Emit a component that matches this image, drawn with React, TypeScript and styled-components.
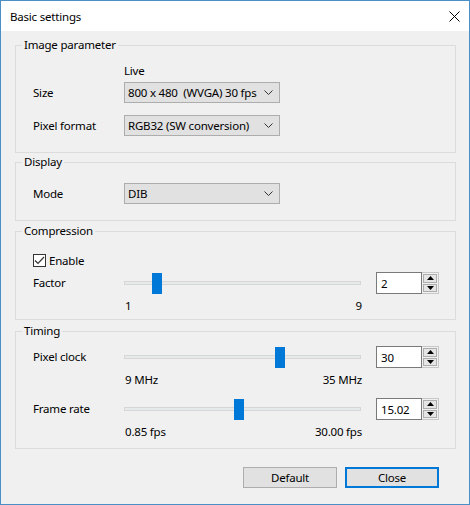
import React, { FC } from 'react';
import styled, { createGlobalStyle } from 'styled-components';

const GlobalStyle = createGlobalStyle`
  html, body {
    margin: 0;
    padding: 0;
    background: #f0f0f0;
  }
  * {
    box-sizing: border-box;
  }
`;

const Window = styled.div`
  width: 470px;
  height: 505px;
  border: 1px solid #4a8fc6;
  background: #f0f0f0;
  font-family: 'Noto Sans', 'Liberation Sans', sans-serif;
  font-size: 11.5px;
  letter-spacing: -0.2px;
  color: #000;
  display: flex;
  flex-direction: column;
  white-space: pre;
`;

const TitleBar = styled.div`
  height: 30px;
  background: #fff;
  display: flex;
  align-items: center;
  justify-content: space-between;
  padding: 1px 9px 0 9px;
  flex-shrink: 0;
`;

const Title = styled.span`
  line-height: 16px;
`;

const CloseGlyph = styled.svg`
  width: 11px;
  height: 11px;
`;

const Content = styled.div`
  flex: 1;
  display: flex;
  flex-direction: column;
  padding: 14px 13px 0 14px;
`;

const Group = styled.div<{ $height: number; $gap: number }>`
  position: relative;
  height: ${(p) => p.$height}px;
  margin-bottom: ${(p) => p.$gap}px;
  border: 1px solid #dcdcdc;
  display: flex;
  flex-direction: column;
  padding-left: 17px;
`;

const Legend = styled.span`
  position: absolute;
  top: -9px;
  left: 6px;
  padding: 0 2px;
  background: #f0f0f0;
  line-height: 16px;
`;

const Row = styled.div<{ $top: number; $height: number }>`
  margin-top: ${(p) => p.$top}px;
  height: ${(p) => p.$height}px;
  display: flex;
  align-items: center;
`;

const Label = styled.span`
  width: 91px;
  flex-shrink: 0;
  line-height: 16px;
`;

const Select = styled.div`
  width: 156px;
  height: 21px;
  border: 1px solid #adadad;
  background: #e1e1e1;
  display: flex;
  align-items: center;
  justify-content: space-between;
  padding: 0 6px 0 3px;
`;

const Chevron = styled.svg`
  width: 9px;
  height: 5px;
`;

const Check = styled.span`
  width: 13px;
  height: 13px;
  border: 1px solid #333;
  background: #fff;
  display: inline-flex;
  align-items: center;
  justify-content: center;
  margin-right: 3px;
`;

const Track = styled.div`
  position: relative;
  width: 237px;
  height: 4px;
  border: 1px solid #d6d6d6;
  background: #e7eaea;
  flex-shrink: 0;
`;

const Thumb = styled.div`
  position: absolute;
  top: -9px;
  width: 10px;
  height: 21px;
  background: #0078d7;
`;

const Spin = styled.div`
  margin-left: 15px;
  height: 22px;
  display: flex;
`;

const SpinField = styled.div`
  width: 46px;
  height: 22px;
  border: 1px solid #7a7a7a;
  background: #fff;
  padding: 0 0 0 4px;
  display: flex;
  align-items: center;
`;

const SpinButtons = styled.div`
  width: 17px;
  height: 22px;
  border: 1px solid #c8c8c8;
  border-left: none;
  display: flex;
  flex-direction: column;
  padding: 1px;
  gap: 1px;
`;

const SpinButton = styled.div`
  flex: 1;
  border: 1px solid #adadad;
  background: #e5e5e5;
  display: flex;
  align-items: center;
  justify-content: center;
`;

const Arrow = styled.svg`
  width: 7px;
  height: 4px;
`;

const Scale = styled.div<{ $top: number }>`
  margin-top: ${(p) => p.$top}px;
  margin-left: 92px;
  width: 237px;
  display: flex;
  justify-content: space-between;
  line-height: 16px;
`;

const Footer = styled.div`
  display: flex;
  justify-content: flex-end;
  gap: 8px;
  padding: 18px 17px 0 0;
`;

const Button = styled.div<{ $primary?: boolean }>`
  width: 94px;
  height: 21px;
  display: flex;
  align-items: center;
  justify-content: center;
  background: #e1e1e1;
  border: ${(p) => (p.$primary ? '2px solid #0078d7' : '1px solid #adadad')};
`;

const ChevronIcon: FC = () => (
  <Chevron viewBox="0 0 9 5">
    <path d="M0.5 0.5 L4.5 4.5 L8.5 0.5" fill="none" stroke="#333" strokeWidth="1" />
  </Chevron>
);

const Dropdown: FC<{ value: string }> = ({ value }) => (
  <Select>
    <span>{value}</span>
    <ChevronIcon />
  </Select>
);

const SpinBox: FC<{ value: string }> = ({ value }) => (
  <Spin>
    <SpinField>{value}</SpinField>
    <SpinButtons>
      <SpinButton>
        <Arrow viewBox="0 0 7 4">
          <path d="M0 4 L3.5 0 L7 4 Z" fill="#000" />
        </Arrow>
      </SpinButton>
      <SpinButton>
        <Arrow viewBox="0 0 7 4">
          <path d="M0 0 L3.5 4 L7 0 Z" fill="#000" />
        </Arrow>
      </SpinButton>
    </SpinButtons>
  </Spin>
);

const Slider: FC<{ fraction: number }> = ({ fraction }) => (
  <Track>
    <Thumb style={{ left: `${Math.round(fraction * 227) - 1}px` }} />
  </Track>
);

type SliderSpec = {
  label: string;
  fraction: number;
  value: string;
  min: string;
  max: string;
};

const SliderBlock: FC<SliderSpec & { top: number }> = ({ label, fraction, value, min, max, top }) => (
  <>
    <Row $top={top} $height={22}>
      <Label>{label}</Label>
      <Slider fraction={fraction} />
      <SpinBox value={value} />
    </Row>
    <Scale $top={4}>
      <span>{min}</span>
      <span>{max}</span>
    </Scale>
  </>
);

const App: FC = () => (
  <>
    <GlobalStyle />
    <Window>
      <TitleBar>
        <Title>Basic settings</Title>
        <CloseGlyph viewBox="0 0 11 11">
          <path d="M0.5 0.5 L10.5 10.5 M10.5 0.5 L0.5 10.5" stroke="#000" strokeWidth="1" />
        </CloseGlyph>
      </TitleBar>
      <Content>
        <Group $height={108} $gap={9}>
          <Legend>Image parameter</Legend>
          <Row $top={16} $height={16}>
            <Label />
            <span>Live</span>
          </Row>
          <Row $top={4} $height={21}>
            <Label>Size</Label>
            <Dropdown value="800 x 480  (WVGA) 30 fps" />
          </Row>
          <Row $top={12} $height={21}>
            <Label>Pixel format</Label>
            <Dropdown value="RGB32 (SW conversion)" />
          </Row>
        </Group>
        <Group $height={59} $gap={10}>
          <Legend>Display</Legend>
          <Row $top={20} $height={21}>
            <Label>Mode</Label>
            <Dropdown value="DIB" />
          </Row>
        </Group>
        <Group $height={89} $gap={11}>
          <Legend>Compression</Legend>
          <Row $top={20} $height={16}>
            <Check>
              <svg width="11" height="9" viewBox="0 0 11 9">
                <path d="M1 4.5 L4 7.5 L10 1" fill="none" stroke="#333" strokeWidth="1.2" />
              </svg>
            </Check>
            <span>Enable</span>
          </Row>
          <SliderBlock top={4} label="Factor" fraction={1 / 8} value="2" min="1" max="9" />
        </Group>
        <Group $height={118} $gap={0}>
          <Legend>Timing</Legend>
          <SliderBlock top={14} label="Pixel clock" fraction={0.665} value="30" min="9 MHz" max="35 MHz" />
          <SliderBlock top={10} label="Frame rate" fraction={0.486} value="15.02" min="0.85 fps" max="30.00 fps" />
        </Group>
        <Footer>
          <Button>Default</Button>
          <Button $primary>Close</Button>
        </Footer>
      </Content>
    </Window>
  </>
);

export default App;
